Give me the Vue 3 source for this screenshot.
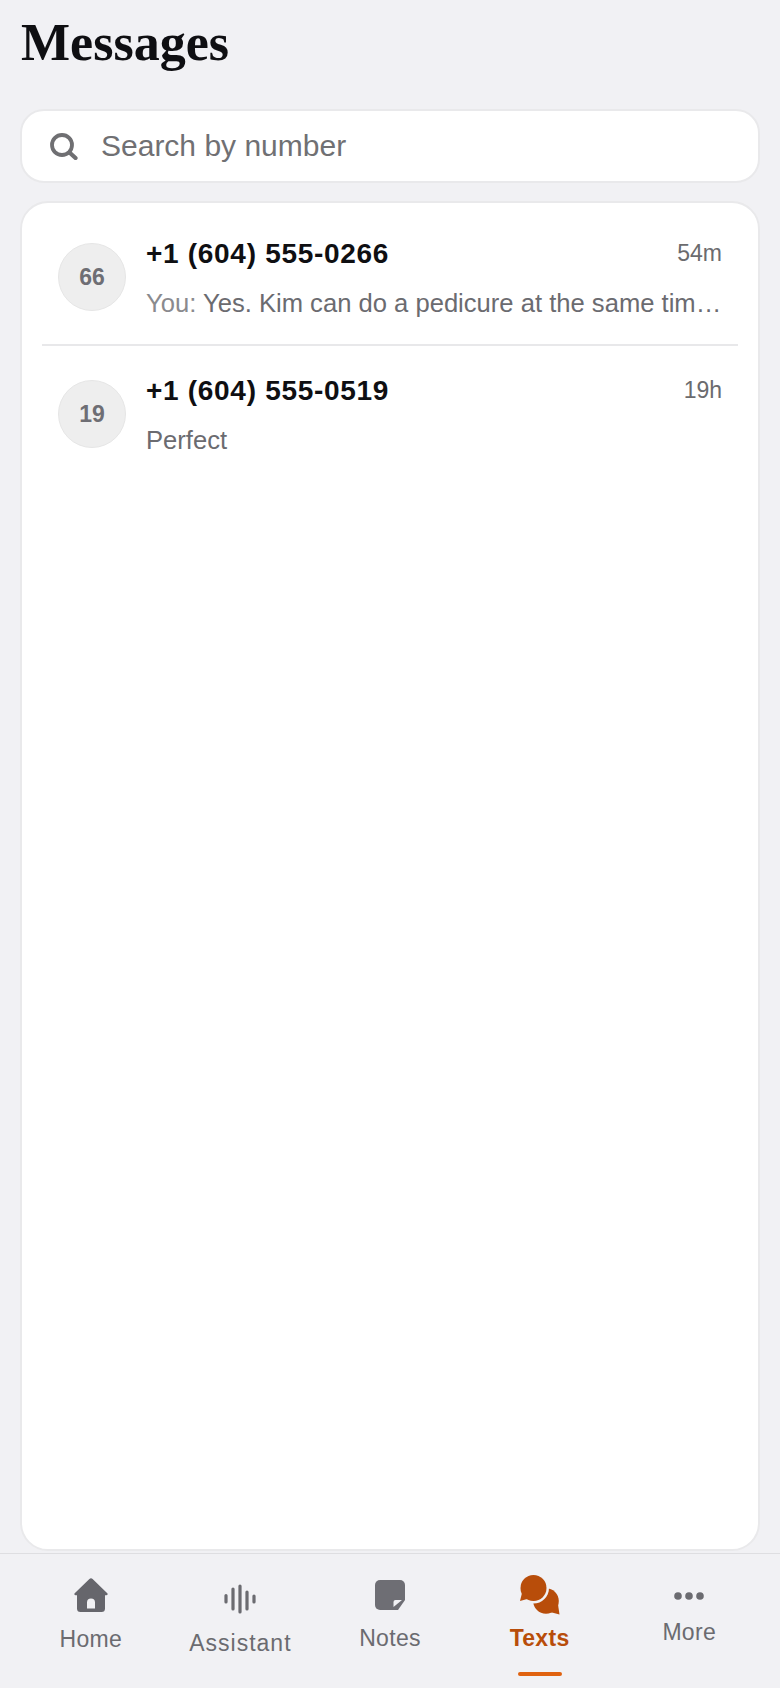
<template>
  <div class="page">
    <h1 class="title">Messages</h1>

    <div class="search">
      <svg class="search-icon" width="28" height="27" viewBox="0 0 28 27">
        <circle cx="12" cy="12" r="10" fill="none" stroke="#6f6f72" stroke-width="3.800" />
        <path d="M19.500 19.500l6 5.500" fill="none" stroke="#6f6f72" stroke-width="4.200" stroke-linecap="round" />
      </svg>
      <span>Search by number</span>
    </div>

    <div class="card">
      <div class="row" v-for="msg in messages" :key="msg.id">
        <div class="avatar">{{ msg.id }}</div>
        <div class="body">
          <div class="top">
            <span class="number">{{ msg.number }}</span>
            <span class="time">{{ msg.time }}</span>
          </div>
          <div class="preview"><span v-if="msg.mine" class="you">You: </span>{{ msg.text }}</div>
        </div>
      </div>
    </div>

    <nav class="tabs">
      <div class="tab tab-home">
        <svg width="34" height="34" viewBox="0 0 34 34">
          <path fill="#66666c" fill-rule="evenodd" d="M15.400.9a2.300 2.300 0 0 1 3.200 0l14.700 14.300c.8.8.3 2-.8 2h-1.500v13.300a3.500 3.500 0 0 1-3.500 3.500H6.500A3.500 3.500 0 0 1 3 30.500V17.200H1.500c-1.100 0-1.600-1.200-.8-2zM13 30.500h8v-6a4 4 0 0 0-8 0z" />
        </svg>
        <span>Home</span>
      </div>
      <div class="tab tab-assistant">
        <svg width="32" height="30" viewBox="0 0 32 30" stroke="#6b6b70" stroke-width="3.200" stroke-linecap="round">
          <path d="M2 11.500v6.500M9 5v20M16 2v26M23 8v17M30 12v6" />
        </svg>
        <span>Assistant</span>
      </div>
      <div class="tab tab-notes">
        <svg width="30" height="30" viewBox="0 0 30 30">
          <path fill="#6e6e74" d="M5 0h20a5 5 0 0 1 5 5v15L23 30H5a5 5 0 0 1-5-5V5a5 5 0 0 1 5-5z" />
          <path fill="#f1f1f4" d="M18.500 27v-5a2 2 0 0 1 2-2h6.500z" />
        </svg>
        <span>Notes</span>
      </div>
      <div class="tab tab-texts">
        <svg width="42" height="40" viewBox="0 0 42 40">
          <circle cx="27" cy="26" r="12.800" fill="#b84d0a" />
          <path fill="#b84d0a" d="M31 37l9.500 2.500-1.500-10z" />
          <circle cx="14.500" cy="13" r="15.500" fill="#f1f1f4" />
          <circle cx="14.500" cy="13" r="13" fill="#b84d0a" />
          <path fill="#b84d0a" d="M3 18l-2 8 9-2.500z" />
        </svg>
        <span>Texts</span>
      </div>
      <div class="tab tab-more">
        <svg width="30" height="8" viewBox="0 0 30 8" fill="#6b6b70">
          <circle cx="4" cy="4" r="3.800" />
          <circle cx="15" cy="4" r="3.800" />
          <circle cx="26" cy="4" r="3.800" />
        </svg>
        <span>More</span>
      </div>
    </nav>
  </div>
</template>

<script setup>
const messages = [
  {
    id: "66",
    number: "+1 (604) 555-0266",
    time: "54m",
    mine: true,
    text: "Yes. Kim can do a pedicure at the same time as your appointment.",
  },
  { id: "19", number: "+1 (604) 555-0519", time: "19h", mine: false, text: "Perfect" },
];
</script>

<style>
html,
body {
  margin: 0;
  background: #f1f1f4;
}
</style>

<style scoped>
.page {
  height: 1688px;
  display: flex;
  flex-direction: column;
  background: #f1f1f4;
  font-family: "Liberation Sans", Arial, sans-serif;
  overflow: hidden;
}

.title {
  margin: 13px 0 0 21px;
  height: 96px;
  font-family: "Liberation Serif", Georgia, serif;
  font-size: 52px;
  line-height: 60px;
  font-weight: 700;
  color: #0f0f12;
}

.search {
  margin: 0 20px;
  height: 74px;
  box-sizing: border-box;
  display: flex;
  align-items: center;
  gap: 23px;
  padding-left: 28px;
  background: #fff;
  border: 2px solid #e9e9eb;
  border-radius: 24px;
  font-size: 30px;
  color: #707073;
}

.search-icon {
  flex-shrink: 0;
}

.card {
  flex: 1;
  margin: 18px 20px 0;
  padding: 7px 20px 0;
  background: #fff;
  border: 2px solid #e9e9eb;
  border-radius: 28px;
}

.row {
  display: flex;
  align-items: center;
  gap: 20px;
  height: 136px;
  box-sizing: border-box;
  padding: 0 16px;
  border-bottom: 2px solid #e8e8ea;
}

.row:last-child {
  border-bottom: none;
}

.avatar {
  width: 68px;
  height: 68px;
  flex-shrink: 0;
  box-sizing: border-box;
  display: flex;
  align-items: center;
  justify-content: center;
  border-radius: 50%;
  background: #eeeeee;
  border: 1px solid #e6e6e6;
  font-size: 23px;
  font-weight: 700;
  color: #6e6e74;
}

.body {
  flex: 1;
  min-width: 0;
}

.top {
  display: flex;
  justify-content: space-between;
  align-items: center;
  height: 38px;
}

.number {
  font-size: 28px;
  letter-spacing: 0.700px;
  font-weight: 700;
  color: #0f0f12;
}

.time {
  font-size: 23px;
  color: #6b6b6e;
}

.preview {
  margin-top: 13px;
  font-size: 25.600px;
  line-height: 34px;
  color: #6b6b70;
  white-space: nowrap;
  overflow: hidden;
  text-overflow: ellipsis;
}

.you {
  color: #8a8a8e;
}

.tabs {
  height: 135px;
  flex-shrink: 0;
  box-sizing: border-box;
  display: grid;
  grid-template-columns: repeat(5, 1fr);
  padding: 0 16px;
  margin-top: 2px;
  border-top: 1px solid #dedee1;
}

.tab {
  position: relative;
  display: flex;
  flex-direction: column;
  align-items: center;
  justify-content: center;
  font-size: 23px;
  letter-spacing: 0.300px;
  color: #6b6b70;
}

.tab-home {
  gap: 14px;
  padding-bottom: 11px;
}

.tab-assistant {
  gap: 16px;
  padding-bottom: 1px;
  letter-spacing: 1px;
}

.tab-notes {
  gap: 15px;
  padding-bottom: 10px;
}

.tab-texts {
  gap: 10px;
  padding-bottom: 15px;
  font-weight: 700;
  color: #b84d0a;
}

.tab-texts::after {
  content: "";
  position: absolute;
  left: 50%;
  bottom: 12px;
  width: 44px;
  height: 4px;
  margin-left: -22px;
  border-radius: 2px;
  background: #e0620f;
}

.tab-more {
  gap: 19px;
  padding-bottom: 4px;
}
</style>
